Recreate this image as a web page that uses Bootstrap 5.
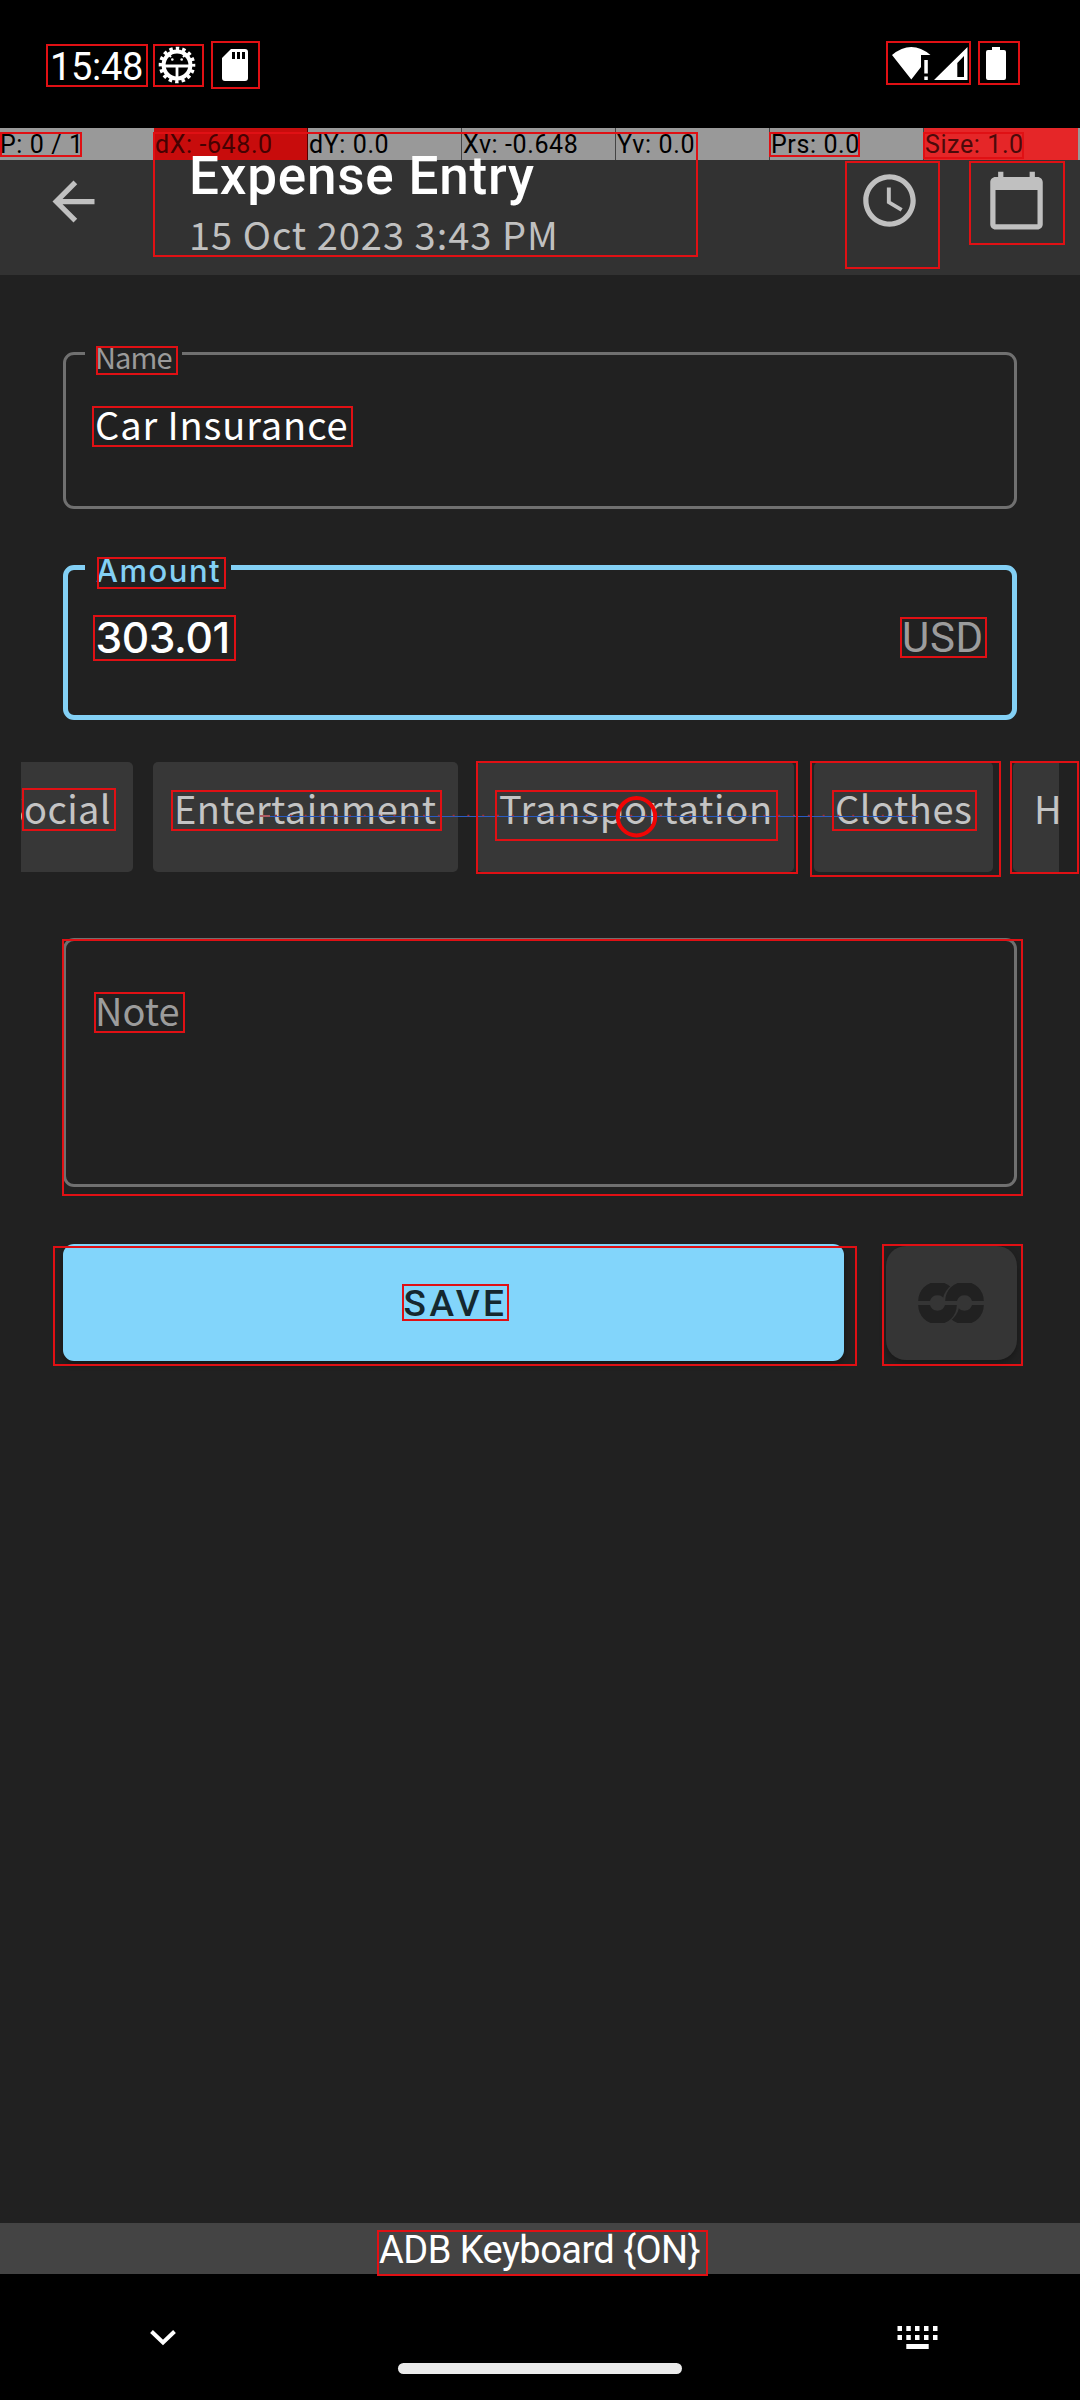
<!DOCTYPE html>
<html lang="en">
<head>
<meta charset="utf-8">
<meta name="viewport" content="width=device-width, initial-scale=1">
<title>Expense Entry</title>
<link href="https://cdn.jsdelivr.net/npm/bootstrap@5.3.0/dist/css/bootstrap.min.css" rel="stylesheet">
<style>
  body { background: #212121; color: #fff; font-family: Roboto, "Liberation Sans", sans-serif; }
  svg { display: block; flex: none; }
  .screen { width: 1080px; height: 2400px; }
  .source { font-family: "Noto Sans CJK SC", "Noto Sans", sans-serif; font-size: 38px; line-height: 56px; }

  .status { height: 128px; padding: 44px 74px 0 50px; }
  .status-time { font-size: 38px; line-height: 46px; letter-spacing: -.32px; width: 108px; }
  .status-gear { margin-top: 2px; }
  .status-card { margin-top: 5px; }
  .status-net { margin: 3px 18px 0 auto; }
  .status-battery { margin-top: 3px; }

  .debug { height: 32px; background: #999; color: #000; font-size: 25px; line-height: 33.5px; letter-spacing: .6px; }
  .debug-cell { width: 154px; padding-left: 1px; border-right: 1px solid #444; }
  .debug-cell.hot { background: #c80c0c; color: #450202; border-right-color: #500; }
  .debug-cell.warm { background: #e52628; color: #4b0a0a; border-right: 0; }
  .debug-cell.plain { border-right-color: #999; padding-left: 0; }

  .appbar { height: 115px; background: #323232; color: #c0c0c0; padding: 9px 32px 0 42px; }
  .appbar-titles { margin: -23px auto 0 84px; z-index: 2; }
  .appbar-title { font-size: 53px; font-weight: 500; line-height: 60px; letter-spacing: .8px; color: #fff; margin: 0; }
  .appbar-sub { line-height: 50px; letter-spacing: 1px; margin-top: 2.5px; }
  .icon-back { margin-top: .5px; }
  .icon-date { margin-left: 64px; }

  .form-area { padding-top: 77px; }
  .field { margin: 0 63px; border: 3px solid #707070; border-radius: 11px; padding: 41px 28.3px 0 29px; }
  .field-name { height: 157px; letter-spacing: .89px; }
  .field-amount { height: 155px; margin-top: 56px; border: 5px solid #83d0f5; padding: 40px 28.3px 0 27.5px; }
  .field-note { height: 249px; margin-top: 66px; color: #9c9c9c; padding-top: 41px; }
  .field-label { top: -17px; left: 19px; width: 97px; padding-left: 10px; background: #212121; color: #9a9a9a;
    font-size: 29px; line-height: 36px; letter-spacing: -.88px; }
  .field-amount .field-label { left: 17px; width: 146px; padding-left: 11px; color: #83d0f5; font: 500 31px/36px Inter, sans-serif; letter-spacing: 1.5px; }
  .amount-value { font: 500 42.5px/56px Inter, sans-serif; letter-spacing: -.4px; }
  .amount-unit { font-size: 42px; line-height: 56px; letter-spacing: .66px; color: #9c9c9c; }

  .chips { margin: 42px 21px 0; height: 110px; gap: 20px; }
  .chip { flex: none; background: #373737; color: #c4c4c4; border-radius: 5px; padding-left: 21px; line-height: 91px; white-space: nowrap; overflow: hidden; }
  .chip-social { width: 112px; padding: 0 22px 0 0; border-radius: 0 5px 5px 0; letter-spacing: .4px; }
  .chip-ent { width: 305px; letter-spacing: .39px; }
  .chip-trans { width: 317px; letter-spacing: .76px; margin-left: -1px; padding-left: 22px; }
  .chip-clothes { width: 179px; letter-spacing: .54px; }
  .chip-h { width: 120px; }

  .actions { margin: 57px 63px 0; }
  .btn-save { width: 781px; height: 117px; border-radius: 11px; background: #82d5fb; color: #15282f; border: 0; padding: 0 0 0 4px;
    font-size: 37px; font-weight: 500; line-height: 120px; letter-spacing: 3.4px; box-shadow: 0 3px 6px rgba(0,0,0,.35); }
  .btn-pair { width: 131px; height: 114px; margin-top: 2px; border-radius: 20px; background: #353535; border: 0; padding: 0 2px 0 0; box-shadow: 0 3px 6px rgba(0,0,0,.3); }

  .ime { height: 51px; background: #444; font-size: 38px; line-height: 55.5px; letter-spacing: -.54px; padding-right: 1px; }
  .navbar-sys { height: 126px; }
  .nav-hide { margin: 55px 221px 0 149px; }
  .nav-keys { margin: 52px 0 0 215px; }
  .home-pill { width: 284px; height: 11px; border-radius: 6px; background: #ebebeb; margin-top: 89px; }
  .bounds-layer { z-index: 3; }
</style>
</head>
<body>
<div class="screen position-relative overflow-hidden d-flex flex-column">

  <div class="status bg-black d-flex align-items-start">
    <div class="status-time">15:48</div>
    <svg class="status-gear" width="38" height="38" viewBox="-19 -19 38 38">
      <circle r="16.3" fill="none" stroke="#fff" stroke-width="4" stroke-dasharray="3.4 3" stroke-dashoffset="1.7"/>
      <circle r="13.4" fill="none" stroke="#fff" stroke-width="4"/>
      <path d="M-12 1H12M0 1V15" stroke="#fff" stroke-width="2.8" fill="none"/>
      <path d="M-9-11L-6-8M9-11L6-8" stroke="#fff" stroke-width="2"/>
      <circle cx="-4.7" cy="-5.5" r="1.3" fill="#fff"/><circle cx="4.7" cy="-5.5" r="1.3" fill="#fff"/>
    </svg>
    <svg class="status-card ms-4" width="28" height="32" viewBox="-2 0 28 32">
      <path d="M9 0H23Q26 0 26 3V29Q26 32 23 32H3Q0 32 0 29V9Z" fill="#fff"/>
      <path d="M10 3h3v7h-3zM15 3h3v7h-3zM20 3h3v7h-3z" fill="#000"/>
    </svg>
    <svg class="status-net" width="76" height="34" viewBox="0 0 76 34">
      <path d="M0 8Q19.3-8 38.5 8H29V20L19.3 32.5Z" fill="#fff"/>
      <path d="M32.3 13h3.5v13.5h-3.5zM32.3 29.5h3.5v3.5h-3.5z" fill="#fff"/>
      <path d="M42 33L75.5 0V33ZM65.3 16V30H72V9Z" fill="#fff" fill-rule="evenodd"/>
    </svg>
    <svg class="status-battery" width="20" height="33" viewBox="0 0 20 33">
      <path d="M6 0h8v3h4q2 0 2 2v26q0 2-2 2H2q-2 0-2-2V5q0-2 2-2h4z" fill="#fff"/>
    </svg>
  </div>

  <div class="debug d-flex">
    <div class="debug-cell plain">P: 0 / 1</div>
    <div class="debug-cell hot">dX: -648.0</div>
    <div class="debug-cell">dY: 0.0</div>
    <div class="debug-cell">Xv: -0.648</div>
    <div class="debug-cell">Yv: 0.0</div>
    <div class="debug-cell">Prs: 0.0</div>
    <div class="debug-cell warm">Size: 1.0</div>
  </div>

  <header class="appbar d-flex align-items-start">
    <svg class="icon-back" width="63" height="63" viewBox="0 0 24 24" fill="currentColor"><path d="M20 11H7.83l5.59-5.59L12 4l-8 8 8 8 1.41-1.41L7.83 13H20v-2z"/></svg>
    <div class="appbar-titles position-relative">
      <h1 class="appbar-title">Expense Entry</h1>
      <div class="appbar-sub source">15 Oct 2023 3:43 PM</div>
    </div>
    <svg width="63" height="63" viewBox="0 0 24 24" fill="currentColor"><path d="M11.99 2C6.47 2 2 6.48 2 12s4.47 10 9.99 10C17.52 22 22 17.52 22 12S17.52 2 11.99 2zM12 20c-4.42 0-8-3.58-8-8s3.58-8 8-8 8 3.58 8 8-3.58 8-8 8zm.5-13H11v6l5.25 3.15.75-1.23-4.5-2.67V7z"/></svg>
    <svg class="icon-date" width="63" height="63" viewBox="0 0 24 24" fill="currentColor"><path d="M20 3h-1V1h-2v2H7V1H5v2H4c-1.1 0-2 .9-2 2v16c0 1.1.9 2 2 2h16c1.1 0 2-.9 2-2V5c0-1.1-.9-2-2-2zm0 18H4V8h16v13z"/></svg>
  </header>

  <main class="form-area flex-grow-1">
    <div class="field field-name source position-relative">
      <div class="field-label position-absolute">Name</div>
      Car Insurance
    </div>
    <div class="field field-amount position-relative d-flex justify-content-between align-items-start">
      <div class="field-label position-absolute">Amount</div>
      <span class="amount-value">303.01</span>
      <span class="amount-unit">USD</span>
    </div>
    <div class="chips source d-flex overflow-hidden">
      <div class="chip chip-social d-flex justify-content-end">Social</div>
      <div class="chip chip-ent">Entertainment</div>
      <div class="chip chip-trans">Transportation</div>
      <div class="chip chip-clothes">Clothes</div>
      <div class="chip chip-h">H</div>
    </div>
    <div class="field field-note source">Note</div>
    <div class="actions d-flex justify-content-between align-items-start">
      <button type="button" class="btn btn-save">SAVE</button>
      <button type="button" class="btn btn-pair d-flex align-items-center justify-content-center">
        <svg width="66" height="40" viewBox="0 0 66 40">
          <defs>
            <mask id="cutR"><rect width="66" height="40" fill="#fff"/><circle cx="46.5" cy="20" r="22" fill="#000"/></mask>
            <mask id="cutL"><rect width="66" height="40" fill="#fff"/><circle cx="19.5" cy="20" r="22" fill="#000"/></mask>
          </defs>
          <g fill="#212121">
            <path mask="url(#cutR)" d="M.2 18A19.3 19.3 0 0 1 38.8 18H27A7.8 7.8 0 0 0 12 18Z"/>
            <path d="M27.2 18A19.3 19.3 0 0 1 65.8 18H54A7.8 7.8 0 0 0 39 18Z"/>
            <path d="M.2 22A19.3 19.3 0 0 0 38.8 22H27A7.8 7.8 0 0 1 12 22Z"/>
            <path mask="url(#cutL)" d="M27.2 22A19.3 19.3 0 0 0 65.8 22H54A7.8 7.8 0 0 1 39 22Z"/>
          </g>
        </svg>
      </button>
    </div>
  </main>

  <div class="ime text-center">ADB Keyboard {ON}</div>
  <div class="navbar-sys bg-black d-flex align-items-start">
    <svg class="nav-hide" width="28" height="17" viewBox="0 0 28 17"><path d="M2.5 2.5L14 13.5L25.5 2.5" fill="none" stroke="#fff" stroke-width="4"/></svg>
    <div class="home-pill"></div>
    <svg class="nav-keys" width="41" height="24" viewBox="0 0 41 24" fill="#fff"><path d="M.5 0h4.5v5H.5zM9.3 0h4.5v5H9.3zM18 0h4.5v5H18zM27 0h4.5v5H27zM36 0h4.5v5H36zM.5 9h4.5v5H.5zM9.3 9h4.5v5H9.3zM18 9h4.5v5H18zM27 9h4.5v5H27zM36 9h4.5v5H36zM9.3 18h22.4v5H9.3z"/></svg>
  </div>

  <svg class="bounds-layer position-absolute top-0 start-0" width="1080" height="2400" fill="none">
    <path d="M265 816.5H918" stroke="#2a5cc4" stroke-width="1"/>
    <path d="M260 816H270" stroke="#b05a62" stroke-width="2"/>
    <path d="M275 815.5H918" stroke="#a33038" stroke-width="1.6" stroke-dasharray="2 12.8"/>
    <circle cx="636.5" cy="816.7" r="18.7" stroke="#f00505" stroke-width="4"/>
    <g id="bounds" stroke="#e01014" stroke-width="2"></g>
  </svg>
</div>
<script src="https://cdn.jsdelivr.net/npm/bootstrap@5.3.0/dist/js/bootstrap.bundle.min.js"></script>
<script>
  // Layout bounds: left, top, right, bottom
  const bounds = [
    [46,44,148,87],[153,44,204,87],[211,41,260,89],[886,41,971,85],[978,41,1020,85],
    [0,132,82,157],[153,132,698,257],[769,132,860,157],[923,132,1024,159],
    [845,161,940,269],[969,161,1065,245],
    [96,346,178,375],[92,406,353,447],[97,557,226,589],[93,615,236,661],[900,617,987,658],
    [22,788,116,831],[171,790,442,831],[495,790,778,841],[476,761,798,874],
    [810,761,1001,877],[832,790,977,831],[1010,761,1079,874],
    [62,939,1023,1196],[94,992,185,1033],[53,1246,857,1366],[402,1284,509,1321],
    [882,1244,1023,1366],[377,2230,708,2276]
  ];
  const g = document.getElementById('bounds');
  for (const [l, t, r, b] of bounds) {
    const e = document.createElementNS('http://www.w3.org/2000/svg', 'rect');
    e.setAttribute('x', l + 1); e.setAttribute('y', t + 1);
    e.setAttribute('width', r - l - 2); e.setAttribute('height', b - t - 2);
    g.append(e);
  }
</script>
</body>
</html>
